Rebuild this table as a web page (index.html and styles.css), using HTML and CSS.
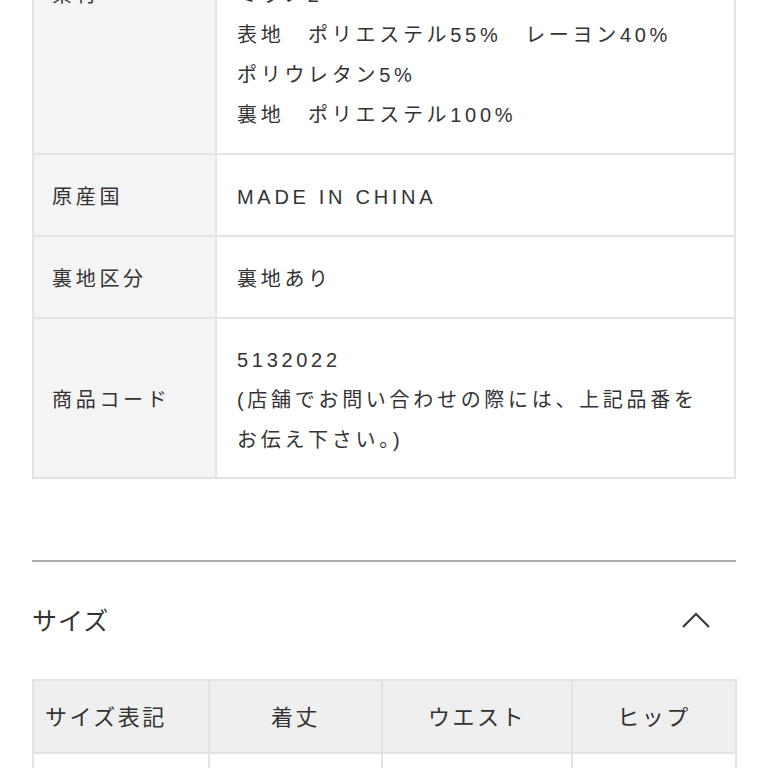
FILE: index.html
```html
<!DOCTYPE html>
<html lang="ja">
<head>
<meta charset="utf-8">
<link rel="stylesheet" href="styles.css">
</head>
<body>
<div class="page">
  <table class="spec">
    <tr>
      <th class="top">素材</th>
      <td>ミラノ2<br>表地　ポリエステル55%　レーヨン40%<br>ポリウレタン5%<br>裏地　ポリエステル100%</td>
    </tr>
    <tr>
      <th>原産国</th>
      <td>MADE IN CHINA</td>
    </tr>
    <tr>
      <th>裏地区分</th>
      <td>裏地あり</td>
    </tr>
    <tr class="code">
      <th>商品コード</th>
      <td>5132022<br>(店舗でお問い合わせの際には、上記品番を<br>お伝え下さい。)</td>
    </tr>
  </table>

  <section class="accordion">
    <div class="acc-head">
      <h2>サイズ</h2>
      <svg class="chev" width="30" height="18" viewBox="0 0 30 18"><path d="M2 16 L15 3 L28 16" fill="none" stroke="#333" stroke-width="2"/></svg>
    </div>
    <table class="size">
      <colgroup>
        <col class="c1"><col class="c2"><col class="c3"><col class="c4">
      </colgroup>
      <tr>
        <th class="first">サイズ表記</th>
        <th>着丈</th>
        <th>ウエスト</th>
        <th>ヒップ</th>
      </tr>
      <tr>
        <td class="first">&nbsp;</td>
        <td>&nbsp;</td>
        <td>&nbsp;</td>
        <td>&nbsp;</td>
      </tr>
    </table>
  </section>
</div>
</body>
</html>
```

FILE: styles.css
```css
html, body {
  margin: 0;
  padding: 0;
  background: #fff;
}
body {
  font-family: "Liberation Sans", "Noto Sans CJK JP", sans-serif;
  color: #333;
  overflow: hidden;
}
.page {
  padding: 0 32px;
}
.spec {
  width: 704px;
  border-collapse: collapse;
  margin-top: -49px;
  font-size: 20px;
  letter-spacing: 3.7px;
  line-height: 40px;
}
.spec th, .spec td {
  border: 2px solid #e3e3e3;
  padding: 22px 18px 18px 18px;
  text-align: left;
  vertical-align: middle;
  font-weight: normal;
}
.spec td {
  padding-left: 20px;
}
.spec th {
  width: 145px;
  background: #f4f4f4;
}
.spec th.top {
  vertical-align: top;
}
.spec .code th, .spec .code td {
  padding-top: 21px;
  padding-bottom: 17px;
}
.accordion {
  margin-top: 81px;
  border-top: 2px solid #b0b0b0;
}
.acc-head {
  height: 117px;
  display: flex;
  align-items: center;
  justify-content: space-between;
}
.acc-head h2 {
  margin: -4px 0 0 0;
  font-family: "Noto Sans CJK JP", sans-serif;
  font-size: 25px;
  font-weight: normal;
  letter-spacing: 1px;
}
.chev {
  margin-right: 25px;
  margin-top: -2px;
}
.size {
  width: 703px;
  border-collapse: collapse;
  table-layout: fixed;
  font-family: "Noto Sans CJK JP", sans-serif;
  font-size: 22px;
  letter-spacing: 2.5px;
}
.size .c1 { width: 176px; }
.size .c2 { width: 173px; }
.size .c3 { width: 190px; }
.size .c4 { width: 164px; }
.size th, .size td {
  border: 2px solid #e3e3e3;
  height: 67px;
  text-align: center;
  font-weight: normal;
  padding: 0;
}
.size th {
  background: #efefef;
  padding-bottom: 4px;
}
.size .first {
  text-align: left;
  padding-left: 11px;
}
```
